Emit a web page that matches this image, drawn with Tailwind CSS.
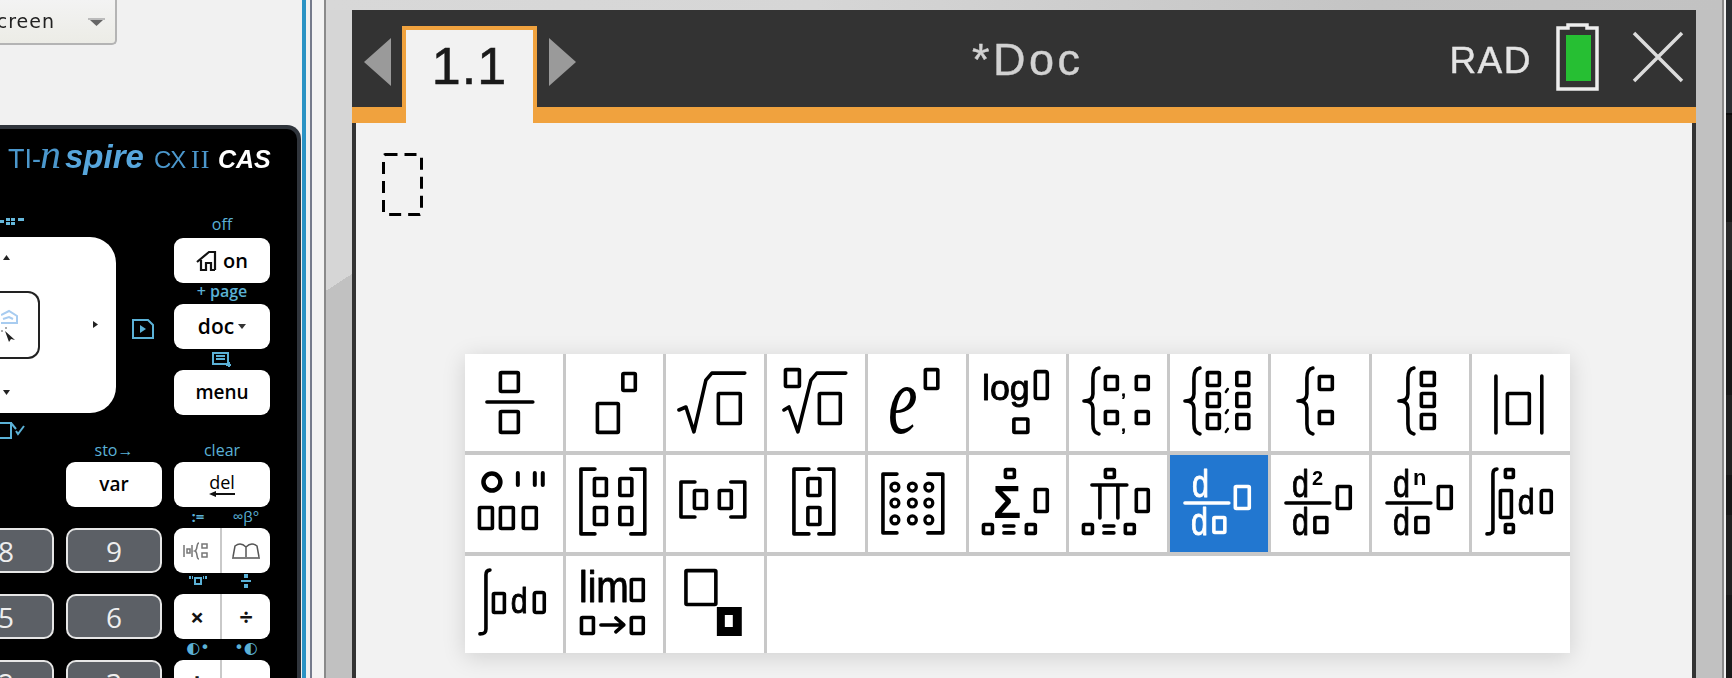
<!DOCTYPE html>
<html>
<head>
<meta charset="utf-8">
<script src="https://cdn.jsdelivr.net/npm/@tailwindcss/browser@4"></script>
</head>
<body class="m-0 bg-[#f1f1f1]">
<div class="flex w-[1732px] h-[678px] overflow-hidden font-['Liberation_Sans',sans-serif]">

  <!-- left: calculator column -->
  <div class="w-[302px] h-[678px] shrink-0 flex flex-col overflow-hidden bg-[#f1f1f1]">
    <div class="h-[125px] shrink-0">
      <div class="w-[117px] h-[45px] flex items-center justify-end border-r-2 border-b-2 border-[#b4b4b4] rounded-br-[5px] bg-[linear-gradient(#f3f3f3,#ecece6)] pr-[10px]">
        <span class="text-[19px] leading-none text-[#222] tracking-[1px] font-['DejaVu_Sans',sans-serif] mr-[33px] whitespace-nowrap blur-[0.3px]">creen</span>
        <svg width="17" height="8" viewBox="0 0 17 8" class="shrink-0"><rect width="17" height="2" fill="#bbb"/><path d="M2 2h13l-6.500 6z" fill="#666"/></svg>
      </div>
    </div>
    <div class="flex-1 w-[301px] bg-black rounded-tr-[14px] border-t-[4px] border-r-[4px] border-[#30353c] overflow-hidden flex flex-col">
      <!-- logo -->
      <div class="h-[88px] shrink-0 flex items-baseline pl-[8px] pt-[4px] text-[#4b97cc] leading-none whitespace-nowrap blur-[0.3px]">
        <span class="text-[27px] w-[32px]">TI-</span>
        <span class="text-[42px] italic font-['Liberation_Serif',serif] w-[25px]">n</span>
        <span class="text-[33px] italic font-bold text-[#57a6dc] w-[89px]">spire</span>
        <span class="text-[24px] w-[37px] tracking-[-1px]">CX</span>
        <span class="text-[26px] font-['Liberation_Serif',serif] w-[27px] tracking-[1px]">II</span>
        <span class="text-[25px] italic font-bold text-white">CAS</span>
      </div>
      <!-- pad and top keys -->
      <div class="h-[224px] shrink-0 flex">
        <div class="w-[174px] flex shrink-0">
          <div class="w-[116px] flex flex-col">
            <div class="h-[20px] flex items-start">
              <svg width="24" height="10" viewBox="0 0 24 10" class="block"><path fill="#66b8dc" d="M0 3h4v3H0zM6 1h4v3H6zM11 1h4v3h-4zM6 5h4v3H6zM11 5h4v3h-4zM18 1h6v3h-6z"/></svg>
            </div>
            <div class="h-[179px] rounded-r-[26px] bg-white flex flex-col justify-between py-[18px]">
              <div class="pl-[3px]"><svg width="7" height="5" viewBox="0 0 7 5" class="block"><path d="M3.500 0L7 5H0z" fill="#222"/></svg></div>
              <div class="flex items-center">
                <div class="w-[40px] h-[68px] border-2 border-l-0 border-[#222] rounded-r-[12px] flex flex-col items-start justify-center pl-[1px]">
                  <svg width="18" height="36" viewBox="0 0 18 36"><path d="M0 8l8-4 8 5v7H0M2 12l6-2 4 2" fill="none" stroke="#a8ccf0" stroke-width="2"/><path d="M4 24l10 9-4-1-2 3z" fill="#222"/><path d="M0 24h2M5 20v2" stroke="#555" stroke-width="1"/></svg>
                </div>
                <svg width="5" height="7" viewBox="0 0 5 7" class="ml-[53px]"><path d="M0 0l5 3.500L0 7z" fill="#222"/></svg>
              </div>
              <div class="pl-[3px]"><svg width="7" height="5" viewBox="0 0 7 5" class="block"><path d="M0 0h7L3.500 5z" fill="#222"/></svg></div>
            </div>
            <div class="pt-[9px]"><svg width="25" height="19" viewBox="0 0 25 19" class="block"><path d="M0 1h11v15H0M11 1l5 6M16 9l2 3 6-8" fill="none" stroke="#5bb1d6" stroke-width="2"/></svg></div>
          </div>
          <div class="pl-[16px] pt-[102px]">
            <svg width="22" height="20" viewBox="0 0 22 20" class="block"><path d="M1 1h15l5 5v13H1z" fill="none" stroke="#5bb1d6" stroke-width="2"/><path d="M8 6l6 4-6 4z" fill="#5bb1d6"/></svg>
          </div>
        </div>
        <div class="w-[96px] shrink-0 flex flex-col font-['Open_Sans',sans-serif]">
          <div class="h-[21px] text-center text-[16px] font-medium leading-[14px] text-[#5bb1d6]">off</div>
          <div class="h-[45px] rounded-[9px] bg-white flex items-center justify-center gap-[1px] text-[20px] font-semibold text-black">
            <svg width="26" height="22" viewBox="0 0 26 22"><path d="M1 12L13 2h6v2M19 2v18M5 10v10h5v-7h5v7h4" fill="none" stroke="#111" stroke-width="2.200"/></svg>
            <span>on</span>
          </div>
          <div class="h-[21px] text-center text-[16px] font-semibold leading-[16px] text-[#5bb1d6] whitespace-nowrap">+ page</div>
          <div class="h-[45px] rounded-[9px] bg-white flex items-center justify-center gap-[4px] text-[21px] font-semibold text-black">
            <span>doc</span>
            <svg width="8" height="5" viewBox="0 0 8 5"><path d="M0 0h8L4 5z" fill="#333"/></svg>
          </div>
          <div class="h-[21px] flex justify-center items-center">
            <svg width="20" height="16" viewBox="0 0 20 16"><path d="M1 1h15v11H1zM4 4h9M4 7h9M17 10v5M14 13h5" fill="none" stroke="#5bb1d6" stroke-width="2"/></svg>
          </div>
          <div class="h-[45px] rounded-[9px] bg-white flex items-center justify-center text-[19px] font-semibold text-black">menu</div>
        </div>
      </div>
      <!-- lower keys -->
      <div class="grid grid-cols-[54px_96px_96px] gap-x-3 auto-rows-[66px] font-['Open_Sans',sans-serif]">
        <div></div>
        <div class="flex flex-col">
          <div class="h-[21px] text-center text-[16px] font-medium leading-[19px] text-[#5bb1d6]">sto→</div>
          <div class="h-[45px] rounded-[9px] bg-white flex items-center justify-center text-[19px] font-semibold text-black">var</div>
        </div>
        <div class="flex flex-col">
          <div class="h-[21px] text-center text-[16px] font-medium leading-[19px] text-[#5bb1d6]">clear</div>
          <div class="h-[45px] rounded-[9px] bg-white flex flex-col items-center justify-center text-[18px] leading-[18px] text-black">
            <span class="font-medium">del</span>
            <svg width="26" height="6" viewBox="0 0 26 6" class="block"><path d="M0 3l7-3v2h19v2H7v2z" fill="#111"/></svg>
          </div>
        </div>

        <div class="flex flex-col justify-end"><div class="ml-[-42px] w-[96px] h-[45px] rounded-[10px] border-2 border-[#e6e6e6] bg-[#5c6066] flex items-center justify-center text-[28px] text-[#eee]">8</div></div>
        <div class="flex flex-col justify-end"><div class="h-[45px] rounded-[10px] border-2 border-[#e6e6e6] bg-[#5c6066] flex items-center justify-center text-[28px] text-[#eee]">9</div></div>
        <div class="flex flex-col">
          <div class="h-[21px] grid grid-cols-2 text-center text-[15px] leading-[18px] text-[#5bb1d6]"><span class="font-bold">:=</span><span class="whitespace-nowrap font-medium">∞β°</span></div>
          <div class="h-[45px] rounded-[9px] bg-white grid grid-cols-2 divide-x-2 divide-[#c9c9c9]">
            <div class="flex items-center justify-center">
              <svg width="28" height="18" viewBox="0 0 28 18"><path d="M1 3v12M9 3v12M4 7h3v4H4zM16 1c-3 0-1 7-4 8 3 1 1 8 4 8M19 2h5v4h-5zM19 11h5v4h-5z" fill="none" stroke="#777" stroke-width="1.500"/></svg>
            </div>
            <div class="flex items-center justify-center">
              <svg width="30" height="18" viewBox="0 0 30 18"><path d="M2 15L4 4c4-3 8-2 11 1 3-3 7-4 11-1l2 11M15 5v10M1 16h28" fill="none" stroke="#555" stroke-width="1.500"/></svg>
            </div>
          </div>
        </div>

        <div class="flex flex-col justify-end"><div class="ml-[-42px] w-[96px] h-[45px] rounded-[10px] border-2 border-[#e6e6e6] bg-[#5c6066] flex items-center justify-center text-[28px] text-[#eee]">5</div></div>
        <div class="flex flex-col justify-end"><div class="h-[45px] rounded-[10px] border-2 border-[#e6e6e6] bg-[#5c6066] flex items-center justify-center text-[28px] text-[#eee]">6</div></div>
        <div class="flex flex-col">
          <div class="h-[21px] grid grid-cols-2 text-center text-[#5bb1d6]">
            <div class="flex justify-center pt-[2px]"><svg width="18" height="12" viewBox="0 0 18 12"><path d="M6 3h6v6H6z" fill="none" stroke="#5bb1d6" stroke-width="2"/><path d="M0 1h2v3H0zM3 1h1v3H3zM14 1h1v3h-1zM16 1h2v3h-2z" fill="#5bb1d6"/></svg></div>
            <div class="flex justify-center pt-[1px]"><svg width="10" height="15" viewBox="0 0 10 15"><path d="M3 0h4v4H3zM0 6h10v2H0zM3 10h4v4H3z" fill="#5bb1d6"/></svg></div>
          </div>
          <div class="h-[45px] rounded-[9px] bg-white grid grid-cols-2 divide-x-2 divide-[#c9c9c9]">
            <div class="flex items-center justify-center text-[24px] font-bold text-[#111] leading-none">×</div>
            <div class="flex items-center justify-center text-[24px] font-bold text-[#111] leading-none">÷</div>
          </div>
        </div>

        <div class="flex flex-col justify-end"><div class="ml-[-42px] w-[96px] h-[45px] rounded-[10px] border-2 border-[#e6e6e6] bg-[#5c6066] flex items-center justify-center text-[28px] text-[#eee]">2</div></div>
        <div class="flex flex-col justify-end"><div class="h-[45px] rounded-[10px] border-2 border-[#e6e6e6] bg-[#5c6066] flex items-center justify-center text-[28px] text-[#eee]">3</div></div>
        <div class="flex flex-col">
          <div class="h-[21px] grid grid-cols-2 text-center text-[16px] leading-[18px] text-[#5bb1d6] font-['DejaVu_Sans',sans-serif]"><span>◐•</span><span>•◐</span></div>
          <div class="h-[45px] rounded-[9px] bg-white grid grid-cols-2 divide-x-2 divide-[#c9c9c9]">
            <div class="flex items-center justify-center text-[30px] font-bold text-[#111] leading-none">+</div>
            <div class="flex items-center justify-center text-[30px] font-bold text-[#111] leading-none">−</div>
          </div>
        </div>
      </div>
    </div>
  </div>

  <!-- separators -->
  <div class="w-[4px] shrink-0 bg-[#2b93c4]"></div>
  <div class="w-[4px] shrink-0 bg-[#f1f1f1]"></div>
  <div class="w-[2px] shrink-0 bg-[#757b8c]"></div>
  <div class="w-[12px] shrink-0 bg-[#f3f3f3]"></div>
  <div class="w-[2px] shrink-0 bg-[#8a8a8a]"></div>

  <!-- device frame -->
  <div class="w-[1396px] shrink-0 flex flex-col">
    <div class="h-[10px] shrink-0 bg-[linear-gradient(90deg,#d8d8d8,#d6d6d6_35%,#c4c4c4_75%,#c2c2c2)]"></div>
    <div class="flex-1 flex min-h-0">
      <div class="w-[26px] shrink-0 bg-[linear-gradient(147deg,#d6d6d6_0,#d6d6d6_41%,#c1c1c1_41%)]"></div>
      <div class="w-[1344px] shrink-0 flex flex-col">
        <!-- header -->
        <div class="h-[97px] shrink-0 bg-[#333] flex items-end relative">
          <div class="w-[50px] h-full flex items-start pl-[12px] pt-[28px]">
            <svg width="27" height="48" viewBox="0 0 27 48" class="block blur-[0.4px]"><path d="M27 0v48L0 24z" fill="#9a9a9a"/></svg>
          </div>
          <div class="relative z-10 w-[135px] h-[97px] -mb-[16px] border-x-4 border-t-4 border-[#f0a23e] bg-[#f2f2f2] flex justify-center pt-[4px]">
            <span class="text-[52px] leading-[64px] text-[#1a1a1a] tracking-[1px] blur-[0.5px] [-webkit-text-stroke:0.6px_#1a1a1a]">1.1</span>
          </div>
          <div class="w-[60px] h-full flex items-start pl-[12px] pt-[28px]">
            <svg width="27" height="48" viewBox="0 0 27 48" class="block blur-[0.4px]"><path d="M0 0v48L27 24z" fill="#9a9a9a"/></svg>
          </div>
          <div class="flex-1 h-full flex items-center pl-[375px] pt-[1px]">
            <span class="text-[45px] leading-none text-[#d2d2d2] tracking-[3.500px] blur-[0.5px] [-webkit-text-stroke:0.4px_#d2d2d2]">*Doc</span>
          </div>
          <div class="h-full flex items-start">
            <span class="mt-[29px] mr-[24px] text-[37px] leading-[44px] text-[#e4e4e4] tracking-[1.500px] blur-[0.5px] [-webkit-text-stroke:0.4px_#e4e4e4]">RAD</span>
            <svg width="43" height="68" viewBox="0 0 43 68" class="block mt-[13px] mr-[33px] blur-[0.4px]"><path d="M12 2h19v3h10v61H2V5h10z" fill="#333" stroke="#eee" stroke-width="3.500"/><rect x="10" y="12" width="25" height="46" fill="#26bf33"/></svg>
            <svg width="52" height="52" viewBox="0 0 52 52" class="block mt-[21px] mr-[12px] blur-[0.4px]"><path d="M2 2l48 48M50 2L2 50" stroke="#dcdcdc" stroke-width="3.500"/></svg>
          </div>
        </div>
        <div class="h-[16px] shrink-0 bg-[#f0a23e]"></div>
        <!-- document -->
        <div class="flex-1 min-h-0 bg-[#f2f2f2] border-x-4 border-[#333] relative">
          <svg width="42" height="63" viewBox="0 0 42 63" class="absolute left-[26px] top-[30px]"><rect x="1.500" y="1.500" width="38" height="60" rx="2" fill="none" stroke="#000" stroke-width="3" stroke-dasharray="12 7"/></svg>

          <!-- template menu -->
          <div class="absolute left-[109px] top-[231px] w-[1105px] grid grid-cols-[repeat(11,minmax(0,1fr))] auto-rows-[97px] gap-x-[3px] gap-y-[4px] bg-[#c8c8c8] shadow-[0_4px_22px_rgba(0,0,0,0.14)] text-black">

            <!-- row 1 -->
            <div class="bg-white"><svg viewBox="0 0 98 97" class="w-full h-full blur-[0.6px]" fill="none" stroke="currentColor" stroke-width="3.600" stroke-linejoin="round" stroke-linecap="round"><rect x="35.500" y="18.500" width="18" height="19" rx="1"/><path d="M22 48h46"/><rect x="35.500" y="57.500" width="18" height="21" rx="1"/></svg></div>
            <div class="bg-white"><svg viewBox="0 0 98 97" class="w-full h-full blur-[0.6px]" fill="none" stroke="currentColor" stroke-width="3.600" stroke-linejoin="round" stroke-linecap="round"><rect x="57" y="19.500" width="12.500" height="17" rx="1"/><rect x="31.500" y="49.500" width="21" height="29" rx="1"/></svg></div>
            <div class="bg-white"><svg viewBox="0 0 98 97" class="w-full h-full blur-[0.6px]" fill="none" stroke="currentColor" stroke-width="3.600" stroke-linejoin="round" stroke-linecap="round"><path d="M13 56l7-3 8 25 12-52 6-7h33"/><rect x="52.500" y="39.500" width="22" height="30" rx="1"/></svg></div>
            <div class="bg-white"><svg viewBox="0 0 98 97" class="w-full h-full blur-[0.6px]" fill="none" stroke="currentColor" stroke-width="3.600" stroke-linejoin="round" stroke-linecap="round"><rect x="18.500" y="15.500" width="14" height="17" rx="1"/><path d="M17 56l5-3 9 25 13-52 6-7h29"/><rect x="52.500" y="39.500" width="21" height="30" rx="1"/></svg></div>
            <div class="bg-white"><svg viewBox="0 0 98 97" class="w-full h-full blur-[0.6px]" fill="none" stroke="currentColor" stroke-width="3.600" stroke-linejoin="round" stroke-linecap="round"><text transform="translate(20 79) scale(0.68 1)" font-family="Liberation Serif" font-style="italic" font-size="98" fill="currentColor" stroke="none">e</text><rect x="57.500" y="15.500" width="12.500" height="19" rx="1"/></svg></div>
            <div class="bg-white"><svg viewBox="0 0 98 97" class="w-full h-full blur-[0.6px]" fill="none" stroke="currentColor" stroke-width="3.600" stroke-linejoin="round" stroke-linecap="round"><text x="13" y="46" textLength="48" lengthAdjust="spacingAndGlyphs" font-family="Liberation Sans" font-size="36" fill="currentColor" stroke="currentColor" stroke-width="0.900">log</text><rect x="66.500" y="17.500" width="12" height="27" rx="2"/><rect x="45" y="65" width="14" height="13.500" rx="1"/></svg></div>
            <div class="bg-white"><svg viewBox="0 0 98 97" class="w-full h-full blur-[0.6px]" fill="none" stroke="currentColor" stroke-width="3.600" stroke-linejoin="round" stroke-linecap="round"><path d="M30 14c-5 1-6 5-6 10v16c0 5-3 7-9 7 6 0 9 2 9 7v16c0 5 1 9 6 10"/><rect x="36.500" y="22.500" width="12" height="13" rx="1"/><rect x="67.500" y="22.500" width="12" height="13" rx="1"/><rect x="36.500" y="57.500" width="12" height="12" rx="1"/><rect x="67.500" y="57.500" width="12" height="12" rx="1"/><text x="52" y="42" font-family="Liberation Sans" font-size="20" fill="currentColor" stroke="currentColor" stroke-width="0.800">,</text><text x="52" y="77" font-family="Liberation Sans" font-size="20" fill="currentColor" stroke="currentColor" stroke-width="0.800">,</text></svg></div>
            <div class="bg-white"><svg viewBox="0 0 98 97" class="w-full h-full blur-[0.6px]" fill="none" stroke="currentColor" stroke-width="3.600" stroke-linejoin="round" stroke-linecap="round"><path d="M30 14c-5 1-6 5-6 10v16c0 5-3 7-9 7 6 0 9 2 9 7v16c0 5 1 9 6 10"/><rect x="37.500" y="18.500" width="12" height="13" rx="1"/><rect x="67" y="18.500" width="12" height="13" rx="1"/><rect x="37.500" y="39.500" width="12" height="13" rx="1"/><rect x="67" y="39.500" width="12" height="13" rx="1"/><rect x="37.500" y="60.500" width="12" height="14" rx="1"/><rect x="67" y="60.500" width="12" height="14" rx="1"/><path d="M56 38l2-3M56 59l2-3M56 78l2-3" stroke-width="2.500"/></svg></div>
            <div class="bg-white"><svg viewBox="0 0 98 97" class="w-full h-full blur-[0.6px]" fill="none" stroke="currentColor" stroke-width="3.600" stroke-linejoin="round" stroke-linecap="round"><path d="M42 14c-5 1-6 5-6 10v16c0 5-3 7-9 7 6 0 9 2 9 7v16c0 5 1 9 6 10"/><rect x="48.500" y="22.500" width="13" height="13" rx="1"/><rect x="48.500" y="57.500" width="13" height="12" rx="1"/></svg></div>
            <div class="bg-white"><svg viewBox="0 0 98 97" class="w-full h-full blur-[0.6px]" fill="none" stroke="currentColor" stroke-width="3.600" stroke-linejoin="round" stroke-linecap="round"><path d="M42 14c-5 1-6 5-6 10v16c0 5-3 7-9 7 6 0 9 2 9 7v16c0 5 1 9 6 10"/><rect x="49.500" y="18.500" width="13" height="13" rx="1"/><rect x="49.500" y="39.500" width="13" height="13" rx="1"/><rect x="49.500" y="60.500" width="13" height="14" rx="1"/></svg></div>
            <div class="bg-white"><svg viewBox="0 0 98 97" class="w-full h-full blur-[0.6px]" fill="none" stroke="currentColor" stroke-width="3.600" stroke-linejoin="round" stroke-linecap="round"><path d="M24 22v57M70 22v57"/><rect x="35.500" y="39.500" width="22" height="30" rx="1"/></svg></div>

            <!-- row 2 -->
            <div class="bg-white"><svg viewBox="0 0 98 97" class="w-full h-full blur-[0.6px]" fill="none" stroke="currentColor" stroke-width="3.600" stroke-linejoin="round" stroke-linecap="round"><circle cx="27" cy="27" r="8.500" stroke-width="4.500"/><path d="M53 18v12M70 18v12M78 18v12" stroke-width="4"/><rect x="14.500" y="52.500" width="13" height="21" rx="1"/><rect x="35.500" y="52.500" width="13" height="21" rx="1"/><rect x="58.500" y="52.500" width="13" height="21" rx="1"/></svg></div>
            <div class="bg-white"><svg viewBox="0 0 98 97" class="w-full h-full blur-[0.6px]" fill="none" stroke="currentColor" stroke-width="3.600" stroke-linejoin="round" stroke-linecap="round"><path d="M29 14H15v65h14M65 14h14v65H65"/><rect x="28.500" y="23.500" width="12" height="17" rx="1"/><rect x="54" y="23.500" width="12" height="17" rx="1"/><rect x="28.500" y="52.500" width="12" height="17" rx="1"/><rect x="54" y="52.500" width="12" height="17" rx="1"/></svg></div>
            <div class="bg-white"><svg viewBox="0 0 98 97" class="w-full h-full blur-[0.6px]" fill="none" stroke="currentColor" stroke-width="3.600" stroke-linejoin="round" stroke-linecap="round"><path d="M29 27H15v35h14M65 27h14v35H65"/><rect x="28.500" y="35.500" width="12" height="18" rx="1"/><rect x="53.500" y="35.500" width="12" height="18" rx="1"/></svg></div>
            <div class="bg-white"><svg viewBox="0 0 98 97" class="w-full h-full blur-[0.6px]" fill="none" stroke="currentColor" stroke-width="3.600" stroke-linejoin="round" stroke-linecap="round"><path d="M42 14H27v65h15M52 14h15v65H52"/><rect x="41" y="23.500" width="12" height="17" rx="1"/><rect x="41" y="52.500" width="12" height="17" rx="1"/></svg></div>
            <div class="bg-white"><svg viewBox="0 0 98 97" class="w-full h-full blur-[0.6px]" fill="none" stroke="currentColor" stroke-width="3.600" stroke-linejoin="round" stroke-linecap="round"><path d="M29 19H15v59h14M60 19h15v59H60"/><g stroke-width="3.200"><circle cx="27" cy="32" r="4"/><circle cx="44.500" cy="32" r="4"/><circle cx="61" cy="32" r="4"/><circle cx="27" cy="48" r="4"/><circle cx="44.500" cy="48" r="4"/><circle cx="61" cy="48" r="4"/><circle cx="27" cy="65" r="4"/><circle cx="44.500" cy="65" r="4"/><circle cx="61" cy="65" r="4"/></g></svg></div>
            <div class="bg-white"><svg viewBox="0 0 98 97" class="w-full h-full blur-[0.6px]" fill="none" stroke="currentColor" stroke-width="3.600" stroke-linejoin="round" stroke-linecap="round"><rect x="36.500" y="14.500" width="9" height="8" rx="1"/><text x="24" y="63" font-family="Liberation Sans" font-weight="bold" font-size="47" fill="currentColor" stroke="none">Σ</text><rect x="66.500" y="34.500" width="12" height="22" rx="1"/><rect x="14.500" y="69.500" width="9" height="9" rx="1"/><path d="M35 71h10M35 78h10"/><rect x="57.500" y="69.500" width="9" height="9" rx="1"/></svg></div>
            <div class="bg-white"><svg viewBox="0 0 98 97" class="w-full h-full blur-[0.6px]" fill="none" stroke="currentColor" stroke-width="3.600" stroke-linejoin="round" stroke-linecap="round"><rect x="36.500" y="14.500" width="9" height="8" rx="1"/><path d="M23 30h35M31 30v33M49 30v33"/><rect x="67.500" y="34.500" width="12" height="22" rx="1"/><rect x="14.500" y="69.500" width="9" height="9" rx="1"/><path d="M35 71h10M35 78h10"/><rect x="56.500" y="69.500" width="9" height="9" rx="1"/></svg></div>
            <div class="bg-[#2277d0] text-white"><svg viewBox="0 0 98 97" class="w-full h-full blur-[0.6px]" fill="none" stroke="currentColor" stroke-width="3.600" stroke-linejoin="round" stroke-linecap="round"><text x="22" y="42" font-family="Liberation Sans" font-size="39" textLength="17" lengthAdjust="spacingAndGlyphs" fill="currentColor" stroke="currentColor" stroke-width="0.900">d</text><path d="M15 48h44"/><text x="21" y="80" font-family="Liberation Sans" font-size="39" textLength="17" lengthAdjust="spacingAndGlyphs" fill="currentColor" stroke="currentColor" stroke-width="0.900">d</text><rect x="44" y="62.500" width="11" height="15" rx="1"/><rect x="65.500" y="31.500" width="14" height="22" rx="1"/></svg></div>
            <div class="bg-white"><svg viewBox="0 0 98 97" class="w-full h-full blur-[0.6px]" fill="none" stroke="currentColor" stroke-width="3.600" stroke-linejoin="round" stroke-linecap="round"><text x="21" y="42" font-family="Liberation Sans" font-size="39" textLength="17" lengthAdjust="spacingAndGlyphs" fill="currentColor" stroke="currentColor" stroke-width="0.900">d</text><text x="41" y="30" font-family="Liberation Sans" font-weight="bold" font-size="20" fill="currentColor" stroke="none">2</text><path d="M15 48h44"/><text x="21" y="80" font-family="Liberation Sans" font-size="39" textLength="17" lengthAdjust="spacingAndGlyphs" fill="currentColor" stroke="currentColor" stroke-width="0.900">d</text><rect x="44" y="62.500" width="12" height="15" rx="1"/><rect x="66.500" y="31.500" width="13" height="22" rx="1"/></svg></div>
            <div class="bg-white"><svg viewBox="0 0 98 97" class="w-full h-full blur-[0.6px]" fill="none" stroke="currentColor" stroke-width="3.600" stroke-linejoin="round" stroke-linecap="round"><text x="21" y="42" font-family="Liberation Sans" font-size="39" textLength="17" lengthAdjust="spacingAndGlyphs" fill="currentColor" stroke="currentColor" stroke-width="0.900">d</text><text x="41" y="30" font-family="Liberation Sans" font-weight="bold" font-size="22" fill="currentColor" stroke="none">n</text><path d="M15 48h44"/><text x="21" y="80" font-family="Liberation Sans" font-size="39" textLength="17" lengthAdjust="spacingAndGlyphs" fill="currentColor" stroke="currentColor" stroke-width="0.900">d</text><rect x="44" y="62.500" width="12" height="15" rx="1"/><rect x="66.500" y="31.500" width="13" height="22" rx="1"/></svg></div>
            <div class="bg-white"><svg viewBox="0 0 98 97" class="w-full h-full blur-[0.6px]" fill="none" stroke="currentColor" stroke-width="3.600" stroke-linejoin="round" stroke-linecap="round"><path d="M25 14c-3 0-4 2-4 5v56c0 3-2 4-6 4"/><rect x="33.500" y="14.500" width="8" height="8" rx="1"/><rect x="28.500" y="35.500" width="11" height="27" rx="1"/><rect x="33.500" y="69.500" width="8" height="8" rx="1"/><text x="46" y="59" font-family="Liberation Sans" font-size="36" textLength="17" lengthAdjust="spacingAndGlyphs" fill="currentColor" stroke="currentColor" stroke-width="0.900">d</text><rect x="69.500" y="35.500" width="10" height="22" rx="2"/></svg></div>

            <!-- row 3 -->
            <div class="bg-white"><svg viewBox="0 0 98 97" class="w-full h-full blur-[0.6px]" fill="none" stroke="currentColor" stroke-width="3.600" stroke-linejoin="round" stroke-linecap="round"><path d="M25 14c-3 0-4 2-4 5v54c0 4-2 5-6 5"/><rect x="28.500" y="37.500" width="11" height="19" rx="1"/><text x="46" y="57" font-family="Liberation Sans" font-size="36" textLength="17" lengthAdjust="spacingAndGlyphs" fill="currentColor" stroke="currentColor" stroke-width="0.900">d</text><rect x="69.500" y="36.500" width="10" height="20" rx="2"/></svg></div>
            <div class="bg-white"><svg viewBox="0 0 98 97" class="w-full h-full blur-[0.6px]" fill="none" stroke="currentColor" stroke-width="3.600" stroke-linejoin="round" stroke-linecap="round"><text x="13" y="46" textLength="50" lengthAdjust="spacingAndGlyphs" font-family="Liberation Sans" font-size="44" fill="currentColor" stroke="currentColor" stroke-width="0.900">lim</text><rect x="65.500" y="23.500" width="12" height="21" rx="1"/><rect x="15.500" y="61.500" width="12" height="16" rx="1"/><path d="M35 69h23M50 62l8 7-8 7"/><rect x="65.500" y="61.500" width="12" height="16" rx="1"/></svg></div>
            <div class="bg-white"><svg viewBox="0 0 98 97" class="w-full h-full blur-[0.6px]" fill="none" stroke="currentColor" stroke-width="3.600" stroke-linejoin="miter" stroke-linecap="round"><rect x="20" y="14.500" width="30" height="34" rx="1"/><path fill-rule="evenodd" fill="currentColor" stroke="none" d="M51 51h25v29H51zM59 59v12h8V59z"/></svg></div>
            <div class="bg-white col-span-8"></div>
          </div>
        </div>
      </div>
      <div class="w-[26px] shrink-0 bg-[#c1c1c1]"></div>
    </div>
  </div>

  <!-- far right -->
  <div class="w-[2px] shrink-0 bg-[#8a8a8a]"></div>
  <div class="w-[2px] shrink-0 bg-[#f1f1f1]"></div>
  <div class="w-[6px] shrink-0 flex flex-col bg-[#1a1a1a]">
    <div class="h-[113px] shrink-0 bg-[#2b2f33]"></div>
    <div class="h-[2px] shrink-0 bg-[#0c0c0c]"></div>
    <div class="h-[107px] shrink-0 bg-[#181818]"></div>
    <div class="h-[48px] shrink-0 bg-[#2a2a2a]"></div>
    <div class="h-[125px] shrink-0 bg-[#181818]"></div>
    <div class="h-[80px] shrink-0 bg-[#222]"></div>
    <div class="h-[40px] shrink-0 bg-[#181818]"></div>
    <div class="h-[80px] shrink-0 bg-[#222]"></div>
  </div>
</div>
</body>
</html>
